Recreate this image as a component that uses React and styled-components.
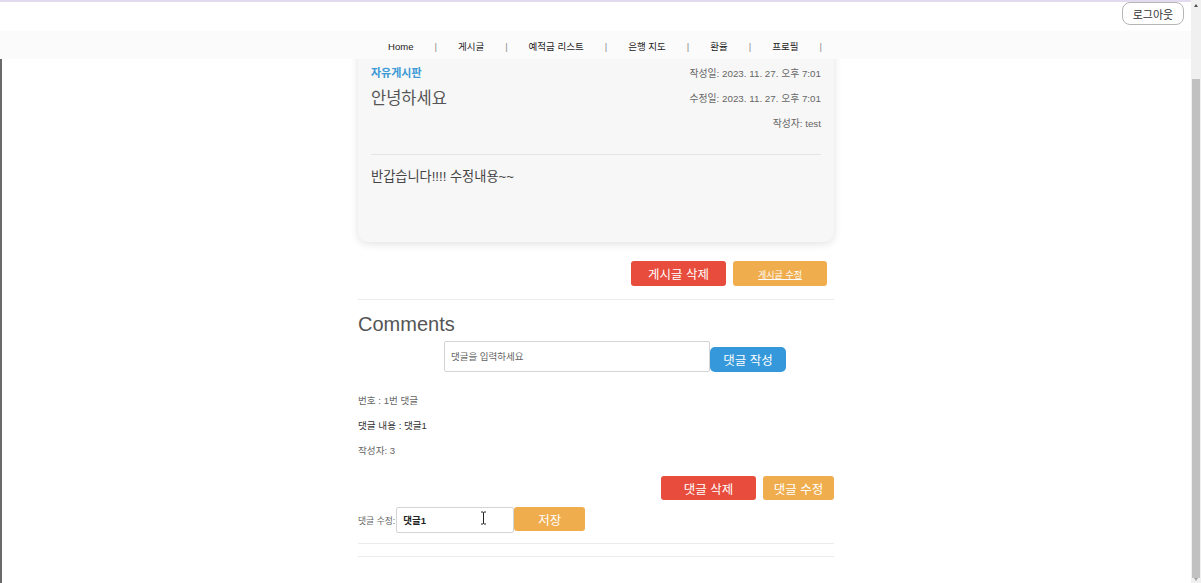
import { useEffect } from 'react'
import styled, { createGlobalStyle } from 'styled-components'

const GlobalStyle = createGlobalStyle`
  html {
    overflow-y: scroll;
    border-left: 2px solid #6a6a6a;
    padding-right: 10px;
  }
  html::-webkit-scrollbar {
    display: none;
  }
  body {
    margin: 0;
    background: #fff;
    font-family: "Liberation Sans", "Noto Sans CJK KR", sans-serif;
    color: #333;
  }
  * {
    box-sizing: border-box;
  }
`

const Header = styled.header`
  position: fixed;
  top: 0;
  left: 0;
  right: 10px;
  z-index: 10;
`

const TopBar = styled.div`
  height: 31px;
  background: #fff;
  border-top: 2px solid #e2daef;
  display: flex;
  justify-content: flex-end;
  align-items: flex-start;
  padding-right: 7px;
`

const LogoutButton = styled.button`
  width: 62px;
  height: 23px;
  border: 1px solid #b5b5b5;
  border-radius: 8px;
  background: #fff;
  color: #333;
  font-family: inherit;
  font-size: 11px;
  cursor: pointer;
`

const NavBar = styled.nav`
  height: 28px;
  background: #fbfbfb;
  display: flex;
  justify-content: center;
  align-items: center;
  padding-left: 40px;
`

const NavLink = styled.a`
  font-size: 9.5px;
  color: #222;
  text-decoration: none;
`

const Sep = styled.span`
  font-size: 9.5px;
  color: #8a8a8a;
  padding: 0 21px;
`

/* window scrollbar as it appears in the capture */
const ScrollTrack = styled.div`
  position: fixed;
  top: 0;
  right: 0;
  width: 10px;
  height: 100%;
  background: #f0f0f0;
  z-index: 20;
`

const ScrollThumb = styled.div`
  position: absolute;
  top: 79px;
  bottom: 5px;
  left: 1px;
  right: 1px;
  background: #c1c1c1;
`

const ScrollArrow = styled.div`
  position: absolute;
  left: 3px;
  width: 0;
  height: 0;
  border-left: 2px solid transparent;
  border-right: 2px solid transparent;
  ${({ $down }) =>
    $down
      ? 'bottom: 2px; border-top: 3px solid #a3a3a3;'
      : 'top: 4px; border-bottom: 3px solid #505050;'}
`

const Main = styled.main`
  padding: 116px 1px 26px 0;
`

const Container = styled.div`
  width: 476px;
  margin: 0 auto;
`

const Card = styled.article`
  background: #f7f7f7;
  border-radius: 10px;
  box-shadow: 0 2px 8px rgba(0, 0, 0, 0.12);
  padding: 20px 13px 55px;
`

const PostHead = styled.div`
  display: flex;
  justify-content: space-between;
  padding-bottom: 18px;
  border-bottom: 1px solid #e4e4e4;
`

const HeadCol = styled.div`
  display: flex;
  flex-direction: column;
  align-items: ${({ $right }) => ($right ? 'flex-end' : 'flex-start')};
`

const Category = styled.span`
  line-height: 25px;
  font-size: 11px;
  font-weight: bold;
  color: #3d9ad6;
`

const Title = styled.h1`
  margin: 0;
  line-height: 25px;
  font-size: 16.5px;
  font-weight: normal;
  color: #555;
`

const Meta = styled.span`
  line-height: 25px;
  font-size: 9.8px;
  color: #666;
`

const PostBody = styled.p`
  margin: 12px 0 0;
  line-height: 20px;
  font-size: 13.2px;
  color: #444;
`

const Actions = styled.div`
  display: flex;
  justify-content: flex-end;
  gap: 7px;
  margin-top: ${({ $top }) => $top}px;
  padding-right: ${({ $inset }) => $inset || 0}px;
`

const colors = {
  red: '#e74c3c',
  orange: '#f0ad4e',
  blue: '#3498db',
}

const Button = styled.button`
  width: ${({ $w }) => $w}px;
  height: ${({ $h }) => $h || 25}px;
  border: none;
  border-radius: ${({ $r }) => $r || 3}px;
  background: ${({ $color }) => colors[$color]};
  color: #fff;
  font-family: inherit;
  font-size: 12.5px;
  padding: 0;
  cursor: pointer;
`

const ButtonLink = styled.a`
  color: #fff;
  font-size: 9px;
  text-decoration: underline;
`

const Divider = styled.hr`
  margin: ${({ $top }) => $top}px 0 0;
  border: none;
  border-top: 1px solid #ebebeb;
`

const SectionTitle = styled.h2`
  margin: 12px 0 0;
  line-height: 24px;
  font-size: 20px;
  font-weight: normal;
  color: #555;
`

const CommentForm = styled.form`
  display: flex;
  align-items: flex-end;
  margin: 5px 0 0 86px;
`

const Input = styled.input`
  width: ${({ $w }) => $w}px;
  height: ${({ $h }) => $h}px;
  border: 1px solid #d4d4d4;
  border-radius: 2px;
  padding: 0 6px;
  font-family: inherit;
  font-size: ${({ $fs }) => $fs || 9.5}px;
  font-weight: ${({ $bold }) => ($bold ? 'bold' : 'normal')};
  color: #222;
  background: #fff;
  outline: none;

  &::placeholder {
    color: #666;
  }
`

const InfoList = styled.div`
  margin-top: 16px;
  display: flex;
  flex-direction: column;
`

const InfoLine = styled.span`
  line-height: 25px;
  font-size: 9.6px;
  color: ${({ $dark }) => ($dark ? '#333' : '#666')};
`

const EditRow = styled.div`
  display: flex;
  align-items: flex-start;
  margin-top: 7px;
`

const EditLabel = styled.label`
  align-self: center;
  font-size: 8.8px;
  color: #666;
  margin-right: 1px;
`

const InputWrap = styled.div`
  position: relative;
`

const Cursor = styled.svg`
  position: absolute;
  left: 84px;
  top: 4px;
  pointer-events: none;
`

function App() {
  useEffect(() => {
    window.scrollTo(0, document.documentElement.scrollHeight)
  }, [])

  const menu = ['Home', '게시글', '예적금 리스트', '은행 지도', '환율', '프로필']

  return (
    <>
      <GlobalStyle />
      <Header>
        <TopBar>
          <LogoutButton>로그아웃</LogoutButton>
        </TopBar>
        <NavBar>
          {menu.map((m) => (
            <span key={m}>
              <NavLink href="#">{m}</NavLink>
              <Sep>|</Sep>
            </span>
          ))}
        </NavBar>
      </Header>
      <ScrollTrack>
        <ScrollArrow />
        <ScrollThumb />
        <ScrollArrow $down />
      </ScrollTrack>
      <Main>
        <Container>
          <Card>
            <PostHead>
              <HeadCol>
                <Category>자유게시판</Category>
                <Title>안녕하세요</Title>
              </HeadCol>
              <HeadCol $right>
                <Meta>작성일: 2023. 11. 27. 오후 7:01</Meta>
                <Meta>수정일: 2023. 11. 27. 오후 7:01</Meta>
                <Meta>작성자: test</Meta>
              </HeadCol>
            </PostHead>
            <PostBody>반갑습니다!!!! 수정내용~~</PostBody>
          </Card>

          <Actions $top={19} $inset={7}>
            <Button $color="red" $w={95}>게시글 삭제</Button>
            <Button $color="orange" $w={94}>
              <ButtonLink href="#">게시글 수정</ButtonLink>
            </Button>
          </Actions>

          <Divider $top={13} />

          <SectionTitle>Comments</SectionTitle>
          <CommentForm onSubmit={(e) => e.preventDefault()}>
            <Input $w={266} $h={31} placeholder="댓글을 입력하세요" />
            <Button $color="blue" $w={76} $r={5}>댓글 작성</Button>
          </CommentForm>

          <InfoList>
            <InfoLine>번호 : 1번 댓글</InfoLine>
            <InfoLine $dark>댓글 내용 : 댓글1</InfoLine>
            <InfoLine>작성자: 3</InfoLine>
          </InfoList>

          <Actions $top={13}>
            <Button $color="red" $w={95} $h={24}>댓글 삭제</Button>
            <Button $color="orange" $w={71} $h={24}>댓글 수정</Button>
          </Actions>

          <EditRow>
            <EditLabel>댓글 수정:</EditLabel>
            <InputWrap>
              <Input $w={118} $h={26} $fs={9.5} $bold defaultValue="댓글1" />
              <Cursor width="7" height="14" viewBox="0 0 7 14">
                <path d="M1 1h2l0.5 0.5L4 1h2M3.5 1.5v11M1 13h2l0.5-0.5L4 13h2" fill="none" stroke="#222" strokeWidth="1" />
              </Cursor>
            </InputWrap>
            <Button $color="orange" $w={71} $h={24}>저장</Button>
          </EditRow>

          <Divider $top={10} />
          <Divider $top={12} />
        </Container>
      </Main>
    </>
  )
}

export default App
